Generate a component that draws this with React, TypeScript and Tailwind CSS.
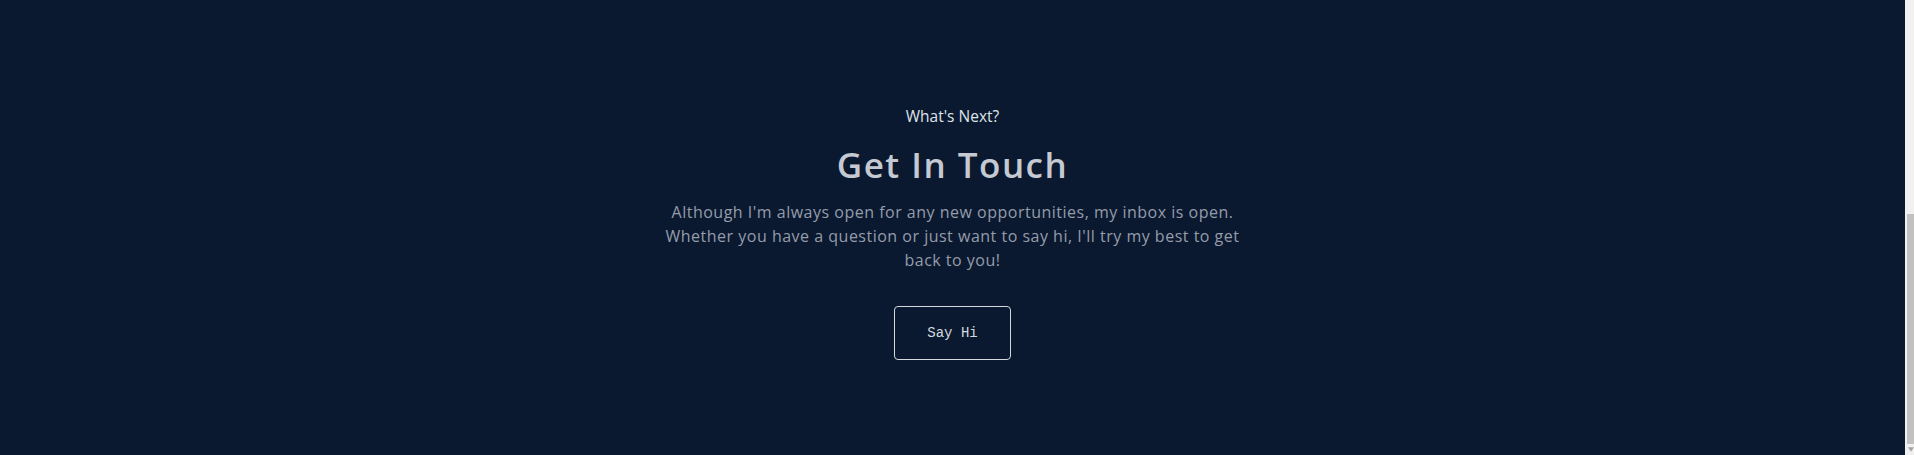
const sans = "font-['Open_Sans','Noto_Sans',sans-serif]";

function Scrollbar() {
  return (
    <div className="flex w-[9px] shrink-0 flex-col bg-[#f1f1f1] pt-[214px]">
      <div className="ml-[2px] h-[230px] bg-[#c1c1c1]" />
      <div className="flex flex-1 items-center justify-center pl-[3px]">
        <svg width="7" height="5" viewBox="0 0 7 5">
          <path d="M0 0h7L3.5 5z" fill="#a3a3a3" />
        </svg>
      </div>
    </div>
  );
}

export default function App() {
  return (
    <div className={`flex h-[455px] overflow-hidden bg-[#0a192f] ${sans}`}>
      <main className="flex-1">
        <section id="contact" className="flex h-[455px] flex-col items-center pt-[104px] text-center">
          <p className="text-[15.5px] leading-6 text-[#dfe3ea]">What's Next?</p>
          <h2 className="mt-[15px] text-[35px] font-semibold leading-[44px] tracking-[1.5px] text-[#c5c9d1]">
            Get In Touch
          </h2>
          <p className="mt-[13px] max-w-[590px] text-[16px] leading-6 tracking-[0.5px] text-[#959cab]">
            Although I'm always open for any new opportunities, my inbox is open. Whether you have a
            question or just want to say hi, I'll try my best to get back to you!
          </p>
          <a
            href="mailto:hello@example.com"
            className="mt-[34px] flex h-[54px] w-[117px] items-center justify-center rounded-[4px] border border-[#d4d8df] font-['Liberation_Mono',monospace] text-[14px] text-[#d4d8df]"
          >
            Say Hi
          </a>
        </section>
      </main>
      <Scrollbar />
    </div>
  );
}
